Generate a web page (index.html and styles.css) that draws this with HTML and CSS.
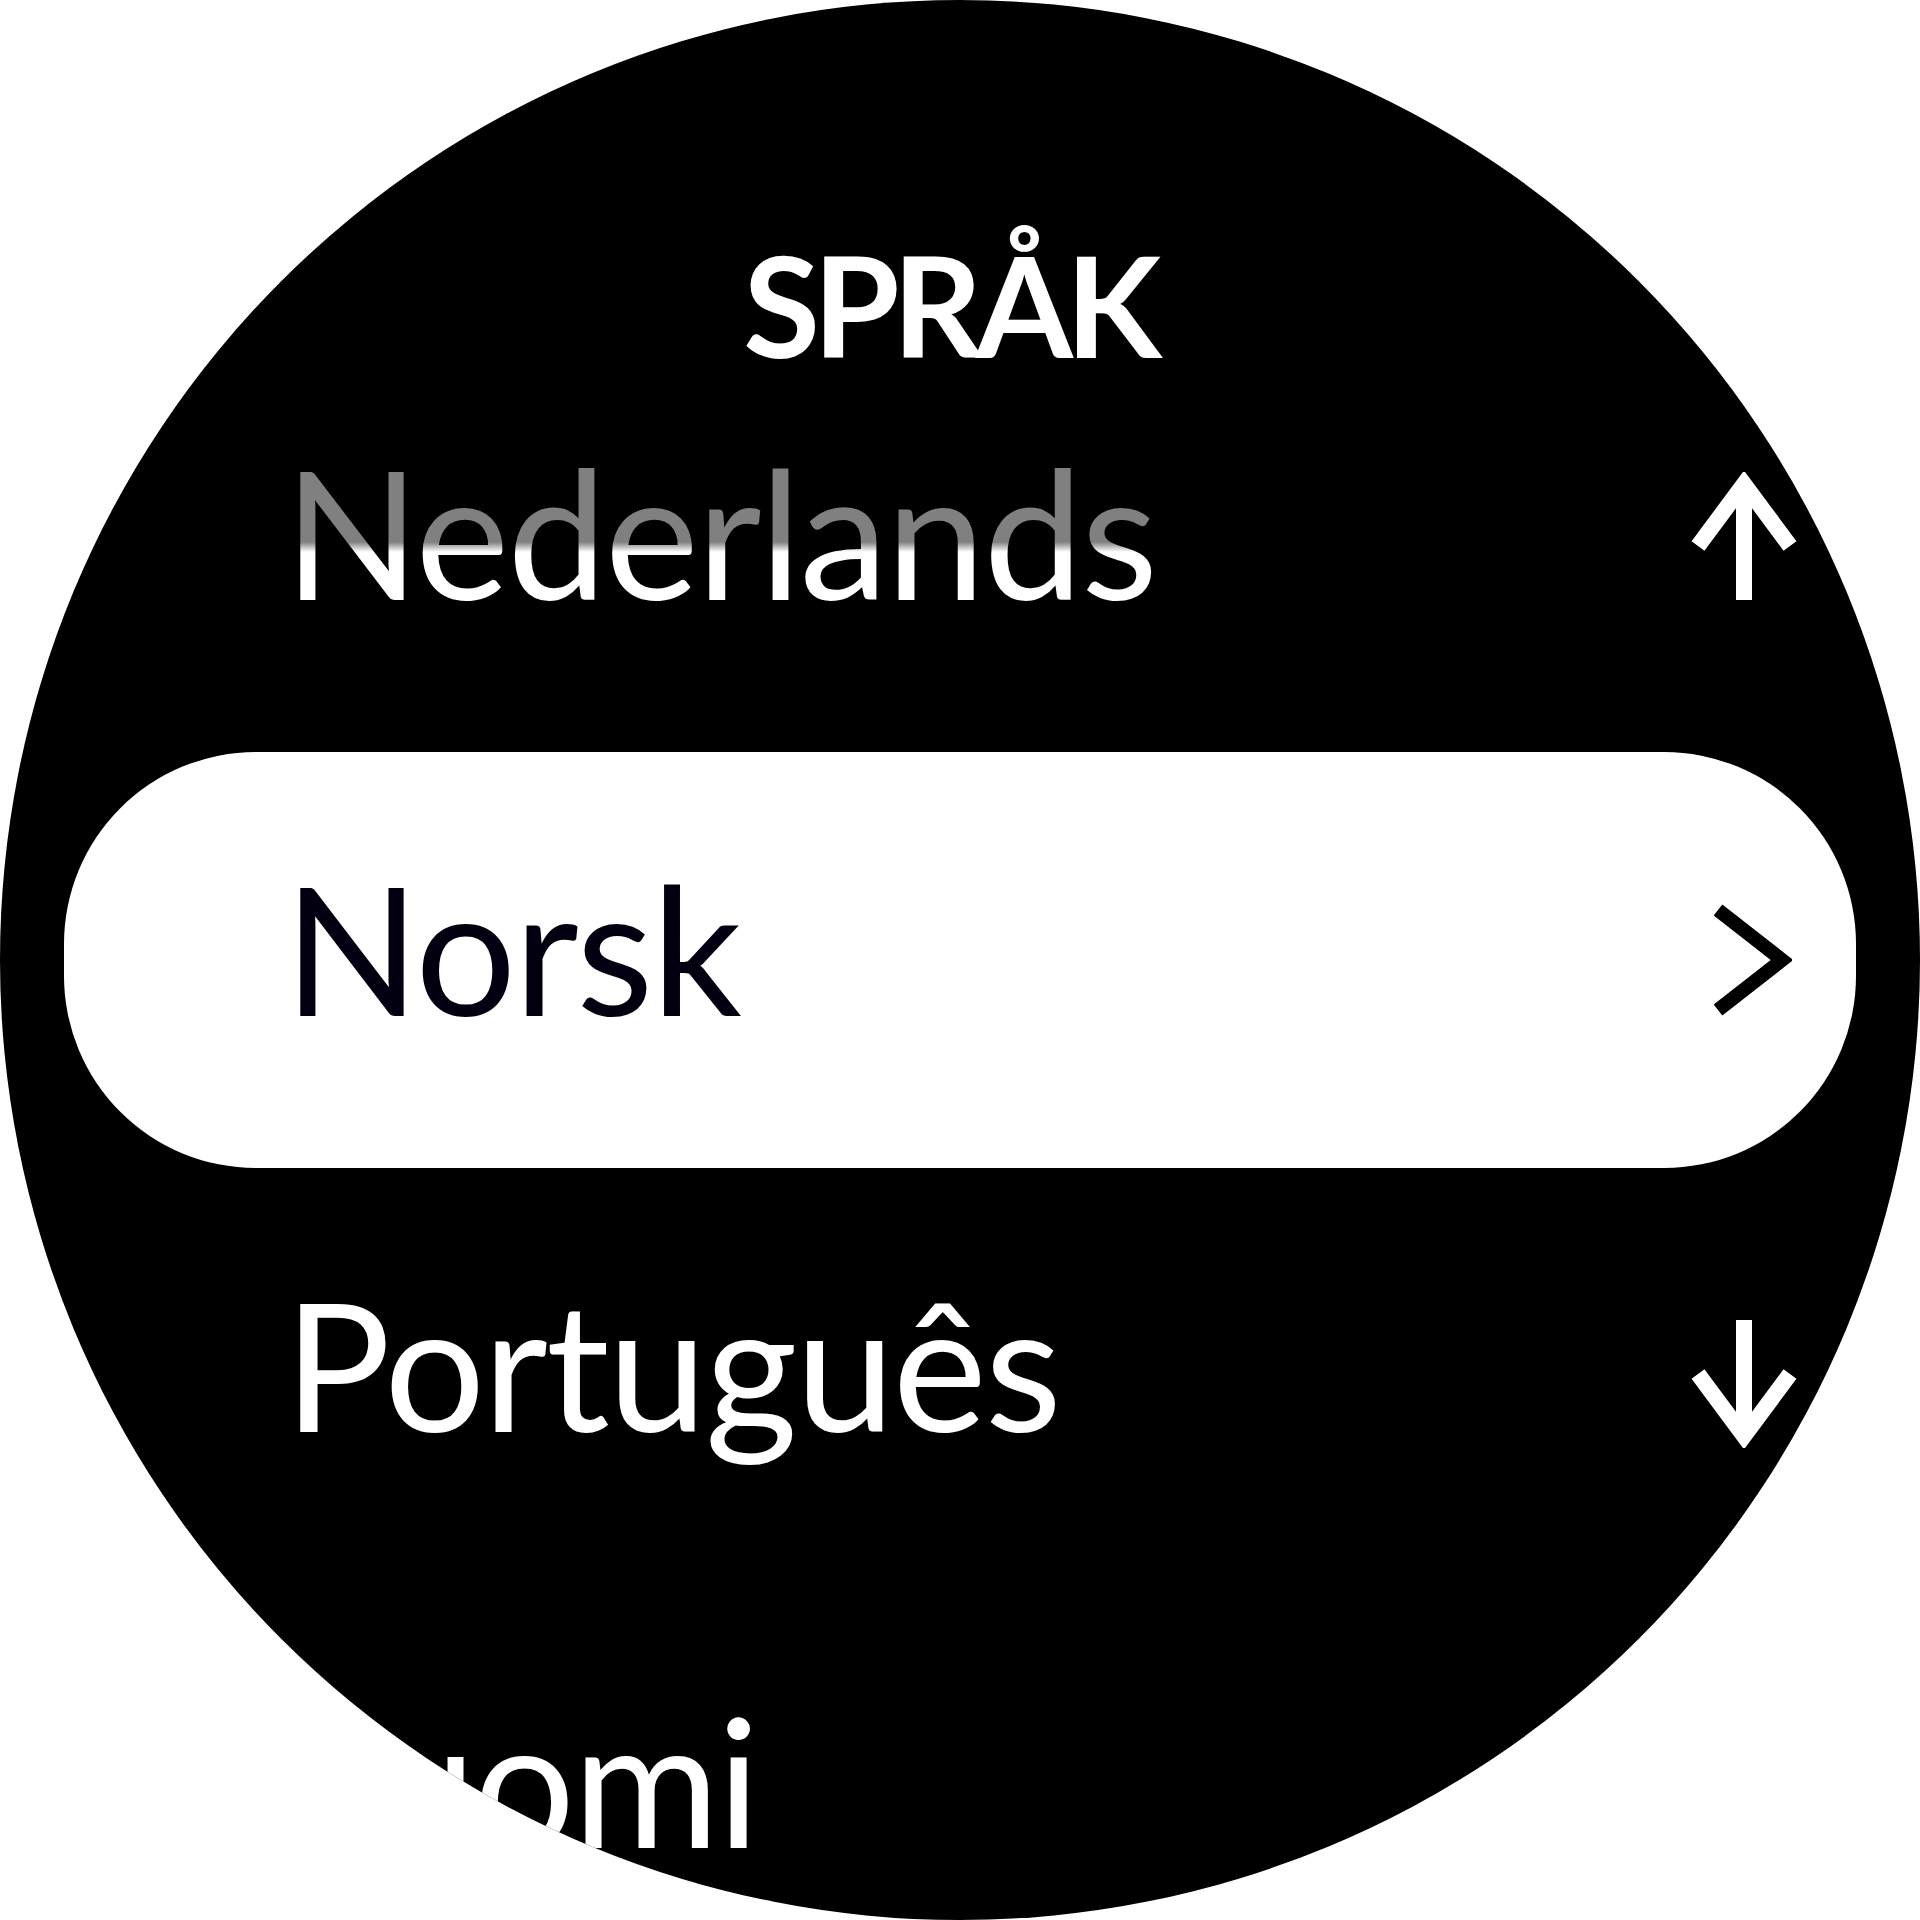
FILE: index.html
```html
<!DOCTYPE html>
<html lang="nb">
<head>
    <meta charset="UTF-8">
    <meta name="viewport" content="width=device-width, initial-scale=1.0">
    <title>Språk</title>
    <link rel="stylesheet" href="styles.css">
</head>
<body>
    <div class="watch">
        <h1 class="title">SPRÅK</h1>

        <ul class="menu">
            <li class="item item-faded">
                <span class="label">Nederlands</span>
                <svg class="icon icon-up" viewBox="0 0 112 128" width="112" height="128">
                    <polyline points="10,74 56,12 102,74" />
                    <line x1="56" y1="14" x2="56" y2="128" />
                </svg>
            </li>
            <li class="item item-selected">
                <span class="label">Norsk</span>
                <svg class="icon icon-chevron" viewBox="0 0 80 112" width="80" height="112">
                    <polyline points="6,6 70,56 6,106" />
                </svg>
            </li>
            <li class="item">
                <span class="label">Português</span>
                <svg class="icon icon-down" viewBox="0 0 112 128" width="112" height="128">
                    <polyline points="10,54 56,116 102,54" />
                    <line x1="56" y1="0" x2="56" y2="114" />
                </svg>
            </li>
            <li class="item">
                <span class="label">Suomi</span>
            </li>
        </ul>
    </div>
</body>
</html>
```

FILE: styles.css
```css
body {
    margin: 0;
    background-color: #fff;
    font-family: Lato, 'Liberation Sans', sans-serif;
}

.watch {
    width: 1920px;
    height: 1920px;
    border-radius: 50%;
    background-color: #000;
    overflow: hidden;
}

.title {
    box-sizing: border-box;
    height: 336px;
    margin: 0;
    padding: 234px 22px 0 0;
    font-size: 140px;
    font-weight: 700;
    line-height: 1;
    letter-spacing: -7px;
    font-kerning: none;
    color: #fff;
    text-align: center;
}

.menu {
    list-style: none;
    margin: 0;
    padding: 0;
}

.item {
    display: flex;
    align-items: center;
    justify-content: space-between;
    height: 416px;
    margin: 0 64px;
    padding: 0 56px 0 220px;
    color: #fff;
}

.label {
    font-size: 178px;
    line-height: 1;
    letter-spacing: -2px;
    margin-bottom: 27px;
}

/* top row fades out toward the title */
.item-faded .label {
    background: linear-gradient(#808080 0, #808080 100px, #fff 110px);
    -webkit-background-clip: text;
    background-clip: text;
    color: transparent;
}

.item-selected {
    background-color: #fff;
    border-radius: 192px;
    color: #020010;
}

.icon {
    fill: none;
    stroke: #fff;
    stroke-width: 16;
}

.icon-up {
    margin-bottom: 16px;
}

.icon-down {
    margin-top: 16px;
}

.icon-chevron {
    stroke: #000;
    stroke-width: 14;
    margin-right: 8px;
}
```
